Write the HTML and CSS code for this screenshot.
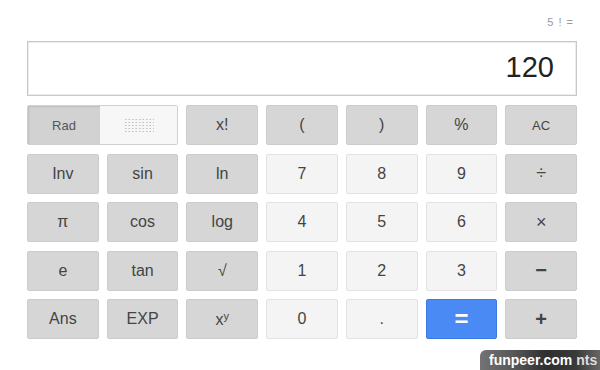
FILE: index.html
```html
<!DOCTYPE html>
<html>
    <head>
        <meta charset="utf-8">
        <title>Calculator</title>
        <link rel="stylesheet" href="styles.css">
    </head>
    <body>
        <div class="calc">
            <div class="history">5 ! =</div>
            <div class="display">120</div>
            <div class="keys">
                <div class="mode">
                    <div class="rad">Rad</div>
                    <div class="deg"><span class="dots"></span></div>
                </div>
                <div class="key dark">x!</div>
                <div class="key dark">(</div>
                <div class="key dark">)</div>
                <div class="key dark">%</div>
                <div class="key dark small">AC</div>

                <div class="key dark">Inv</div>
                <div class="key dark">sin</div>
                <div class="key dark">ln</div>
                <div class="key">7</div>
                <div class="key">8</div>
                <div class="key">9</div>
                <div class="key dark big">÷</div>

                <div class="key dark">π</div>
                <div class="key dark">cos</div>
                <div class="key dark">log</div>
                <div class="key">4</div>
                <div class="key">5</div>
                <div class="key">6</div>
                <div class="key dark big">×</div>

                <div class="key dark">e</div>
                <div class="key dark">tan</div>
                <div class="key dark">√</div>
                <div class="key">1</div>
                <div class="key">2</div>
                <div class="key">3</div>
                <div class="key dark bold">−</div>

                <div class="key dark">Ans</div>
                <div class="key dark">EXP</div>
                <div class="key dark"><span>x<sup>y</sup></span></div>
                <div class="key">0</div>
                <div class="key">.</div>
                <div class="key blue">=</div>
                <div class="key dark bold">+</div>
            </div>
        </div>
        <div class="mark"><b>funpeer.com</b><span>nts</span></div>
    </body>
</html>
```

FILE: styles.css
```css
* {
    margin: 0;
    padding: 0;
    box-sizing: border-box;
}
body {
    width: 600px;
    height: 370px;
    overflow: hidden;
    background: #fff;
    font-family: "Liberation Sans", Arial, sans-serif;
    color: #444;
    position: relative;
}
.calc {
    width: 550px;
    margin-left: 27px;
    padding-top: 16px;
}
.history {
    text-align: right;
    font-size: 11px;
    color: #9a9a9a;
    height: 15px;
    padding-right: 3px;
    letter-spacing: 1px;
}
.display {
    margin-top: 10px;
    height: 55px;
    border: 1px solid #c8c8c8;
    box-shadow: inset 0 0 0 1px #ececec;
    text-align: right;
    font-size: 29px;
    line-height: 51px;
    color: #222;
    padding-right: 22px;
}
.keys {
    margin-top: 9px;
    display: grid;
    grid-template-columns: repeat(7, 1fr);
    grid-auto-rows: 40px;
    column-gap: 8px;
    row-gap: 8.5px;
}
.key {
    display: flex;
    align-items: center;
    justify-content: center;
    font-size: 16px;
    background: #f4f4f4;
    border: 1px solid #e2e2e2;
    border-radius: 2px;
    color: #444;
}
.key.dark {
    background: #d6d6d6;
    border-color: #cccccc;
}
.key.small {
    font-size: 13px;
}
.key.big {
    font-size: 18px;
}
.key.bold {
    font-size: 20px;
    font-weight: bold;
}
.key.blue {
    background: #4a8af4;
    border-color: #3b7ae4;
    color: #fff;
    font-size: 24px;
    font-weight: bold;
}
.key sup {
    font-size: 11px;
    vertical-align: 5px;
}
.mode {
    grid-column: span 2;
    display: flex;
    border: 1px solid #d0d0d0;
    border-radius: 2px;
}
.rad {
    width: 72px;
    display: flex;
    align-items: center;
    justify-content: center;
    font-size: 13px;
    background: #d2d2d2;
    box-shadow: inset 1px 1px 2px #bdbdbd;
    color: #555;
}
.deg {
    flex: 1;
    display: flex;
    align-items: center;
    justify-content: center;
    background: #f7f7f7;
}
.dots {
    width: 30px;
    height: 15px;
    background-image: radial-gradient(circle, #c4c4c4 0.8px, transparent 1.1px);
    background-size: 3.5px 3px;
}
.mark {
    position: absolute;
    right: 0;
    bottom: 0;
    width: 120px;
    height: 20px;
    border-radius: 6px 0 0 0;
    background: linear-gradient(to right, #737373 0%, #555 30%, #2f2f2f 55%, #3a3a3a 80%, #666 100%);
    font-family: "Liberation Sans", Arial, sans-serif;
    font-size: 14px;
    line-height: 20px;
    padding-left: 9px;
    color: #fff;
    white-space: nowrap;
}
.mark span {
    color: #ddd;
    font-weight: bold;
    margin-left: 4px;
}
```
